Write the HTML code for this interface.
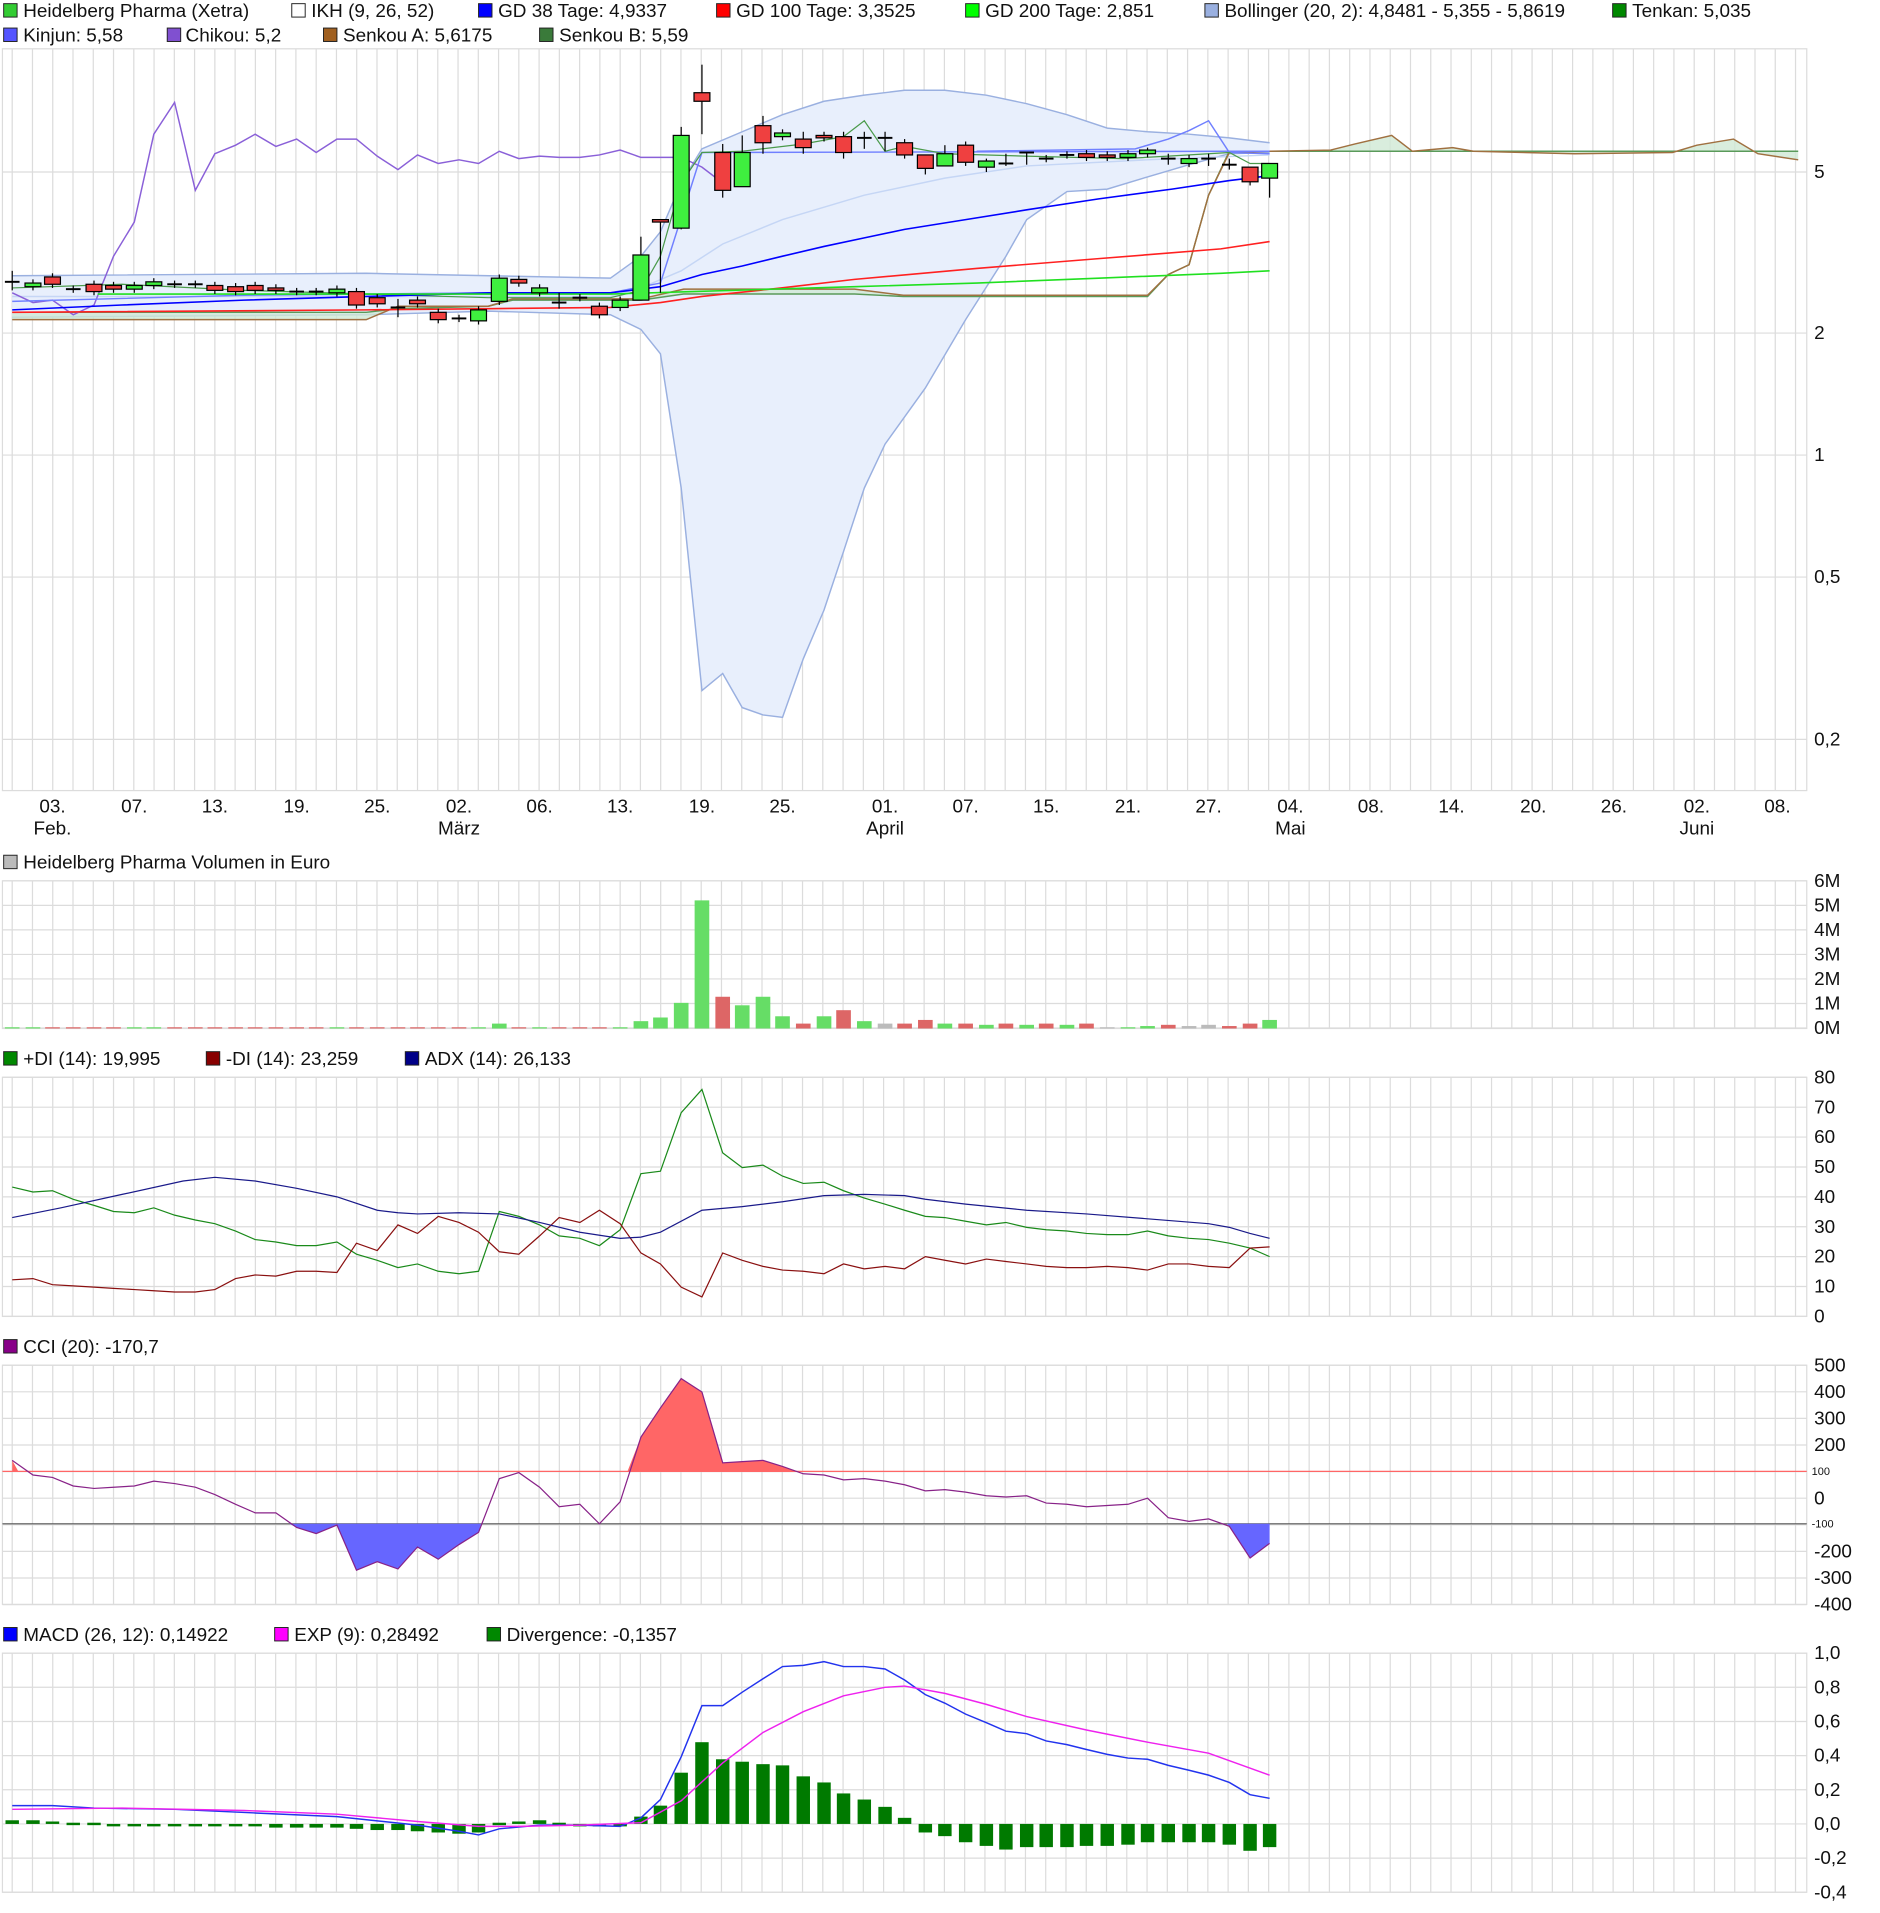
<!DOCTYPE html>
<html><head><meta charset="utf-8"><style>
html,body{margin:0;padding:0;background:#fff;width:1880px;height:1913px;overflow:hidden}
svg{display:block}
text{font-family:"Liberation Sans",sans-serif;fill:#111}
</style></head><body>
<svg id="s" width="1880" height="1913" viewBox="0 0 1540 1568" preserveAspectRatio="none" xmlns="http://www.w3.org/2000/svg">
<g id="grid"></g>
<g id="main"></g>
<g font-size="15.5">
<rect x="3" y="3" width="11" height="11" fill="#3c3" stroke="#222" stroke-width=".8"/><text x="19" y="14">Heidelberg Pharma (Xetra)</text>
<rect x="239" y="3" width="11" height="11" fill="#fff" stroke="#222" stroke-width=".8"/><text x="255" y="14">IKH (9, 26, 52)</text>
<rect x="392" y="3" width="11" height="11" fill="#00f" stroke="#222" stroke-width=".8"/><text x="408" y="14">GD 38 Tage: 4,9337</text>
<rect x="587" y="3" width="11" height="11" fill="#f00" stroke="#222" stroke-width=".8"/><text x="603" y="14">GD 100 Tage: 3,3525</text>
<rect x="791" y="3" width="11" height="11" fill="#0f0" stroke="#222" stroke-width=".8"/><text x="807" y="14">GD 200 Tage: 2,851</text>
<rect x="987" y="3" width="11" height="11" fill="#9ab0e0" stroke="#222" stroke-width=".8"/><text x="1003" y="14">Bollinger (20, 2): 4,8481 - 5,355 - 5,8619</text>
<rect x="1321" y="3" width="11" height="11" fill="#080" stroke="#222" stroke-width=".8"/><text x="1337" y="14">Tenkan: 5,035</text>
<rect x="3" y="23" width="11" height="11" fill="#55f" stroke="#222" stroke-width=".8"/><text x="19" y="34">Kinjun: 5,58</text>
<rect x="137" y="23" width="11" height="11" fill="#8050d0" stroke="#222" stroke-width=".8"/><text x="152" y="34">Chikou: 5,2</text>
<rect x="265" y="23" width="11" height="11" fill="#a06020" stroke="#222" stroke-width=".8"/><text x="281" y="34">Senkou A: 5,6175</text>
<rect x="442" y="23" width="11" height="11" fill="#3a7a3a" stroke="#222" stroke-width=".8"/><text x="458" y="34">Senkou B: 5,59</text>
<rect x="3" y="701" width="11" height="11" fill="#bbb" stroke="#222" stroke-width=".8"/><text x="19" y="712">Heidelberg Pharma Volumen in Euro</text>
<rect x="3" y="862" width="11" height="11" fill="#080" stroke="#222" stroke-width=".8"/><text x="19" y="873">+DI (14): 19,995</text>
<rect x="169" y="862" width="11" height="11" fill="#800" stroke="#222" stroke-width=".8"/><text x="185" y="873">-DI (14): 23,259</text>
<rect x="332" y="862" width="11" height="11" fill="#008" stroke="#222" stroke-width=".8"/><text x="348" y="873">ADX (14): 26,133</text>
<rect x="3" y="1098" width="11" height="11" fill="#808" stroke="#222" stroke-width=".8"/><text x="19" y="1109">CCI (20): -170,7</text>
<rect x="3" y="1334" width="11" height="11" fill="#00f" stroke="#222" stroke-width=".8"/><text x="19" y="1345">MACD (26, 12): 0,14922</text>
<rect x="225" y="1334" width="11" height="11" fill="#f0f" stroke="#222" stroke-width=".8"/><text x="241" y="1345">EXP (9): 0,28492</text>
<rect x="399" y="1334" width="11" height="11" fill="#080" stroke="#222" stroke-width=".8"/><text x="415" y="1345">Divergence: -0,1357</text>
</g>
<g id="labels" font-size="15.5"></g>
</svg>
<script>
var NS="http://www.w3.org/2000/svg";
function el(p,t,a,txt){var e=document.createElementNS(NS,t);for(var k in a)e.setAttribute(k,a[k]);if(txt!==undefined)e.textContent=txt;document.getElementById(p).appendChild(e);return e;}
function pts(a){var s=[];for(var i=0;i<a.length;i+=2)s.push(a[i]+","+a[i+1]);return s.join(" ");}
function line(a,c,w,g){el(g||"main","polyline",{points:pts(a),fill:"none",stroke:c,"stroke-width":w||1});}
var panels=[[40,648],[722,843],[883,1079],[1119,1315],[1355,1551]];
var G="#dcdcdc";
panels.forEach(function(p){
 for(var i=0;i<=88;i++){var x=10+16.6*i;el("grid","line",{x1:x,y1:p[0],x2:x,y2:p[1],stroke:G,"stroke-width":1});}
 el("grid","rect",{x:2,y:p[0],width:1478,height:p[1]-p[0],fill:"none",stroke:G,"stroke-width":1});
});
function hl(y){el("grid","line",{x1:2,y1:y,x2:1480,y2:y,stroke:G,"stroke-width":1});}
[141,273,373,473,606].forEach(hl);
for(var y=722;y<=843;y+=20.1)hl(y);
for(var i=0;i<=8;i++)hl(883+i*24.5);
for(var i=0;i<=9;i++)hl(1119+i*21.8);
for(var i=0;i<=7;i++)hl(1355+i*28);
function lab(x,y,t,s){el("labels","text",{x:x,y:y,"font-size":s||15.5},t);}
[["5",141],["2",273],["1",373],["0,5",473],["0,2",606]].forEach(function(a){lab(1486,a[1]+5,a[0]);});
["6M","5M","4M","3M","2M","1M","0M"].forEach(function(t,i){lab(1486,727+i*20.1,t);});
["80","70","60","50","40","30","20","10","0"].forEach(function(t,i){lab(1486,888+i*24.5,t);});
["500","400","300","200","","0","","-200","-300","-400"].forEach(function(t,i){if(t)lab(1486,1124+i*21.8,t);});
el("labels","text",{x:1484,y:1209,"font-size":9,fill:"#f44"},"100");
el("labels","text",{x:1484,y:1252,"font-size":9,fill:"#44f"},"-100");
["1,0","0,8","0,6","0,4","0,2","0,0","-0,2","-0,4"].forEach(function(t,i){lab(1486,1360+i*28,t);});
var xl=[["03.",43,"Feb."],["07.",110],["13.",176],["19.",243],["25.",309],["02.",376,"März"],["06.",442],["13.",508],["19.",575],["25.",641],["01.",725,"April"],["07.",791],["15.",857],["21.",924],["27.",990],["04.",1057,"Mai"],["08.",1123],["14.",1189],["20.",1256],["26.",1322],["02.",1390,"Juni"],["08.",1456]];
xl.forEach(function(a){el("labels","text",{x:a[1],y:666,"text-anchor":"middle"},a[0]);if(a[2])el("labels","text",{x:a[1],y:684,"text-anchor":"middle"},a[2]);});

var bu=[10,226,300,224,500,228,525,210,541,190,558,150,575,122,608,108,641,94,675,83,708,78,741,74,774,74,808,78,841,85,874,94,907,105,940,108,974,110,1007,113,1040,117];
var bl=[10,260,300,258,400,255,500,258,525,270,541,290,558,400,575,566,592,552,608,580,625,586,641,588,658,540,675,500,691,452,708,400,725,364,758,318,791,262,824,210,841,180,874,157,907,155,940,145,974,135,1007,126,1040,125];
var poly=bu.slice();for(var i=bl.length-2;i>=0;i-=2)poly.push(bl[i],bl[i+1]);
el("main","polygon",{points:pts(poly),fill:"#e8effc",stroke:"none"});
line(bu,"#9ab0e0",1.2);line(bl,"#9ab0e0",1.2);
line([10,243,500,243,525,236,558,222,592,200,641,180,708,160,774,146,841,136,940,131,1040,127],"#c5d6f5",1.2);
var sa=[10,262,300,262,326,251,400,251,420,245,525,245,560,237,700,237,740,242,940,242,957,225,974,217,990,160,1007,125,1040,124,1090,123,1110,118,1140,111,1157,124,1190,121,1207,124,1290,126,1370,125,1390,119,1420,114,1440,126,1473,131];
var sb=[10,256,300,256,326,253,400,251,420,246,525,246,560,241,700,241,740,243,940,243,957,225,974,217,990,160,1007,124,1473,124];
var cp=sa.slice();for(var i=sb.length-2;i>=0;i-=2)cp.push(sb[i],sb[i+1]);
el("main","polygon",{points:pts(cp),fill:"#cfe9d4",stroke:"none",opacity:.8});
line(sb,"#5a9a5a",1.2);line(sa,"#a07040",1.2);
line([10,240,27,248,43,246,60,258,77,250,93,210,110,182,126,110,143,84,160,156,176,126,193,119,209,110,226,120,243,114,259,125,276,114,292,114,309,128,326,139,342,127,359,134,376,131,392,134,409,124,425,130,442,128,458,129,475,129,491,127,508,123,525,129,541,129,558,129,575,137,592,150],"#8a60d8",1.2);
line([10,247,200,242,400,240,500,240,541,232,575,125,1007,124,1040,124],"#7080ff",1.2);
line([800,124,930,122,957,114,974,107,990,99,1007,125,1040,126],"#7080ff",1.2);
line([10,236,100,233,200,238,300,241,400,244,500,244,525,238,541,210,558,150,575,125,608,124,658,118,691,112,708,99,725,124,741,120,774,126,840,128,920,130,957,128,1007,125,1024,134,1040,134],"#4a9a4a",1);
line([10,254,100,250,200,246,300,243,400,240,500,240,541,235,575,225,608,218,641,210,675,202,708,195,741,188,791,180,841,172,900,163,960,155,1007,148,1040,144],"#0000ff",1.3);
line([10,256,300,254,400,253,500,252,541,248,575,243,640,236,700,229,800,220,900,212,1000,204,1040,198],"#ff2020",1.3);
line([80,241,500,241,600,238,700,235,800,232,900,228,1000,224,1040,222],"#20e020",1.3);
var C=[[10,231,231,"d",222,238],[27,232,235,"g"],[43,227,233,"r"],[60,237,237,"d"],[77,233,239,"r"],[93,234,237,"r"],[110,234,237,"g"],[126,231,234,"g"],[143,233,233,"d"],[160,233,233,"d"],[176,234,238,"r"],[193,235,239,"r"],[209,234,238,"r"],[226,236,238,"r"],[243,239,239,"d"],[259,239,239,"d"],[276,237,240,"g"],[292,239,250,"r"],[309,244,249,"r"],[326,252,252,"d",245,260],[342,246,249,"r"],[359,256,262,"r"],[376,261,261,"d"],[392,254,263,"g"],[409,228,247,"g"],[425,229,232,"r"],[442,236,240,"g"],[458,248,248,"d",240,253],[475,244,244,"d"],[491,251,258,"r"],[508,246,252,"g"],[525,209,246,"g",194,246],[541,180,182,"r",180,240],[558,111,187,"g",104,188],[575,76,83,"r",53,110],[592,125,156,"r",118,162],[608,125,153,"g",111,153],[625,103,117,"r",95,126],[641,109,112,"g"],[658,114,121,"r",108,126],[675,111,113,"r"],[691,112,125,"r",108,130],[708,113,113,"d",108,122],[725,113,113,"d",108,124],[741,117,127,"r"],[758,127,138,"r",127,143],[774,126,136,"g",119,136],[791,119,133,"r"],[808,132,137,"g",130,141],[824,134,134,"d",126,136],[841,125,125,"d",125,135],[857,130,130,"d"],[874,127,127,"d"],[890,126,129,"r"],[907,127,129,"r"],[924,126,129,"g"],[940,123,126,"g",121,129],[957,130,130,"d",126,135],[974,130,134,"g"],[990,130,130,"d",126,136],[1007,135,135,"d",130,139],[1024,137,149,"r",137,152],[1040,134,146,"g",134,162]];
C.forEach(function(c){
 var wt=c[4]||c[1]-3,wb=c[5]||c[2]+3;
 el("main","line",{x1:c[0],y1:wt,x2:c[0],y2:wb,stroke:"#000","stroke-width":1});
 if(c[3]=="d")el("main","line",{x1:c[0]-6,y1:c[1],x2:c[0]+6,y2:c[1],stroke:"#000","stroke-width":1.6});
 else el("main","rect",{x:c[0]-6.5,y:c[1],width:13,height:Math.max(2,c[2]-c[1]),fill:c[3]=="g"?"#3fef3f":"#ef4040",stroke:"#000","stroke-width":1});
});
var V=[[10,1,"g"],[27,1,"g"],[43,1,"r"],[60,1,"r"],[77,1,"r"],[93,1,"r"],[110,1,"g"],[126,1,"g"],[143,1,"r"],[160,1,"r"],[176,1,"r"],[193,1,"r"],[209,1,"r"],[226,1,"r"],[243,1,"r"],[259,1,"r"],[276,1,"g"],[292,1,"r"],[309,1,"r"],[326,1,"r"],[342,1,"r"],[359,1,"r"],[376,1,"r"],[392,1,"g"],[409,4,"g"],[425,1,"r"],[442,1,"g"],[458,1,"r"],[475,1,"r"],[491,1,"r"],[508,1,"g"],[525,6,"g"],[541,9,"g"],[558,21,"g"],[575,105,"g"],[592,26,"r"],[608,19,"g"],[625,26,"g"],[641,10,"g"],[658,4,"r"],[675,10,"g"],[691,15,"r"],[708,6,"g"],[725,4,"x"],[741,4,"r"],[758,7,"r"],[774,4,"g"],[791,4,"r"],[808,3,"g"],[824,4,"r"],[841,3,"g"],[857,4,"r"],[874,3,"g"],[890,4,"r"],[907,1,"x"],[924,1,"g"],[940,2,"g"],[957,3,"r"],[974,2,"x"],[990,3,"x"],[1007,2,"r"],[1024,4,"r"],[1040,7,"g"]];
V.forEach(function(v){el("main","rect",{x:v[0]-6,y:843-v[1],width:12,height:v[1],fill:v[2]=="g"?"#66dd66":v[2]=="r"?"#dd6666":"#bbbbbb"});});
line([10,973,27,977,43,976,60,983,77,988,93,993,110,994,126,990,143,996,160,1000,176,1003,193,1009,209,1016,226,1018,243,1021,259,1021,276,1018,292,1028,309,1033,326,1039,342,1036,359,1042,376,1044,392,1042,409,993,425,997,442,1004,458,1013,475,1015,491,1021,508,1008,525,962,541,960,558,912,575,893,592,945,608,957,625,955,641,964,658,970,675,969,691,976,708,982,725,987,741,992,758,997,774,998,791,1001,808,1004,824,1002,841,1006,857,1008,874,1009,890,1011,907,1012,924,1012,940,1009,957,1013,974,1015,990,1016,1007,1019,1024,1023,1040,1030],"#1a8a1a",1);
line([10,1049,27,1048,43,1053,60,1054,77,1055,93,1056,110,1057,126,1058,143,1059,160,1059,176,1057,193,1048,209,1045,226,1046,243,1042,259,1042,276,1043,292,1019,309,1025,326,1004,342,1011,359,997,376,1002,392,1010,409,1026,425,1028,442,1013,458,998,475,1002,491,992,508,1003,525,1027,541,1036,558,1055,575,1063,592,1027,608,1033,625,1038,641,1041,658,1042,675,1044,691,1036,708,1040,725,1038,741,1040,758,1030,774,1033,791,1036,808,1032,824,1034,841,1036,857,1038,874,1039,890,1039,907,1038,924,1039,940,1041,957,1036,974,1036,990,1038,1007,1039,1024,1023,1040,1022],"#8a1010",1);
line([10,998,50,990,100,979,150,968,176,965,209,968,243,974,276,981,309,992,326,994,342,995,376,994,409,995,442,1002,475,1010,508,1015,525,1014,541,1010,575,992,608,989,641,985,675,980,708,979,741,980,758,983,791,987,841,992,890,995,940,999,990,1003,1007,1006,1024,1011,1040,1015],"#1a1a8a",1);
el("main","line",{x1:2,y1:1206,x2:1480,y2:1206,stroke:"#f66","stroke-width":1});
el("main","line",{x1:2,y1:1249,x2:1480,y2:1249,stroke:"#555","stroke-width":1});
el("main","polygon",{points:"10,1197 15,1206 10,1206",fill:"#f66"});
el("main","polygon",{points:"514,1206 525,1178 541,1154 558,1130 575,1141 592,1199 608,1198 625,1197 641,1202 652,1206",fill:"#ff6666"});
el("main","polygon",{points:"237,1249 243,1252 259,1257 276,1250 292,1287 309,1280 326,1286 342,1268 359,1278 376,1266 392,1256 394,1249",fill:"#6666ff"});
el("main","polygon",{points:"1005,1249 1007,1251 1024,1277 1040,1265 1040,1249",fill:"#6666ff"});
line([10,1197,27,1209,43,1211,60,1218,77,1220,93,1219,110,1218,126,1214,143,1216,160,1219,176,1225,193,1233,209,1240,226,1240,243,1252,259,1257,276,1250,292,1287,309,1280,326,1286,342,1268,359,1278,376,1266,392,1256,409,1212,425,1207,442,1219,458,1235,475,1233,491,1249,508,1231,525,1178,541,1154,558,1130,575,1141,592,1199,608,1198,625,1197,641,1202,658,1208,675,1209,691,1213,708,1212,725,1214,741,1217,758,1222,774,1221,791,1223,808,1226,824,1227,841,1226,857,1232,874,1233,890,1235,907,1234,924,1233,940,1228,957,1244,974,1247,990,1245,1007,1251,1024,1277,1040,1265],"#882288",1);
var H=[10,1492,27,1492,43,1493,60,1494,77,1494,93,1496,110,1496,126,1496,143,1497,160,1497,176,1497,193,1497,209,1497,226,1498,243,1498,259,1498,276,1498,292,1499,309,1500,326,1500,342,1501,359,1502,376,1503,392,1502,409,1494,425,1493,442,1492,458,1494,475,1496,491,1496,508,1495,525,1489,541,1480,558,1453,575,1428,592,1442,608,1444,625,1446,641,1447,658,1456,675,1461,691,1470,708,1475,725,1481,741,1490,758,1502,774,1505,791,1510,808,1513,824,1516,841,1514,857,1514,874,1514,890,1513,907,1513,924,1512,940,1510,957,1510,974,1510,990,1510,1007,1512,1024,1517,1040,1514];
for(var i=0;i<H.length;i+=2){var y=H[i+1],t=Math.min(y,1495),h=Math.max(2,Math.abs(y-1495));el("main","rect",{x:H[i]-5.5,y:t,width:11,height:h,fill:"#007a00"});}
line([10,1480,43,1480,77,1482,143,1483,209,1486,276,1489,342,1496,376,1501,392,1504,409,1499,442,1496,475,1496,508,1497,525,1490,541,1475,558,1440,575,1398,592,1398,608,1387,625,1376,641,1366,658,1365,675,1362,691,1366,708,1366,725,1368,741,1377,758,1389,774,1396,791,1405,808,1412,824,1419,841,1421,857,1427,874,1430,890,1434,907,1438,924,1441,940,1442,957,1447,974,1451,990,1455,1007,1461,1024,1471,1040,1474],"#2233ee",1.2);
line([10,1483,100,1482,200,1484,276,1487,342,1493,392,1497,425,1497,475,1496,525,1494,558,1476,592,1445,625,1420,658,1403,691,1390,725,1383,741,1382,774,1388,808,1397,841,1407,890,1418,940,1428,990,1437,1040,1455],"#ee22ee",1.2);
</script>
</body></html>
